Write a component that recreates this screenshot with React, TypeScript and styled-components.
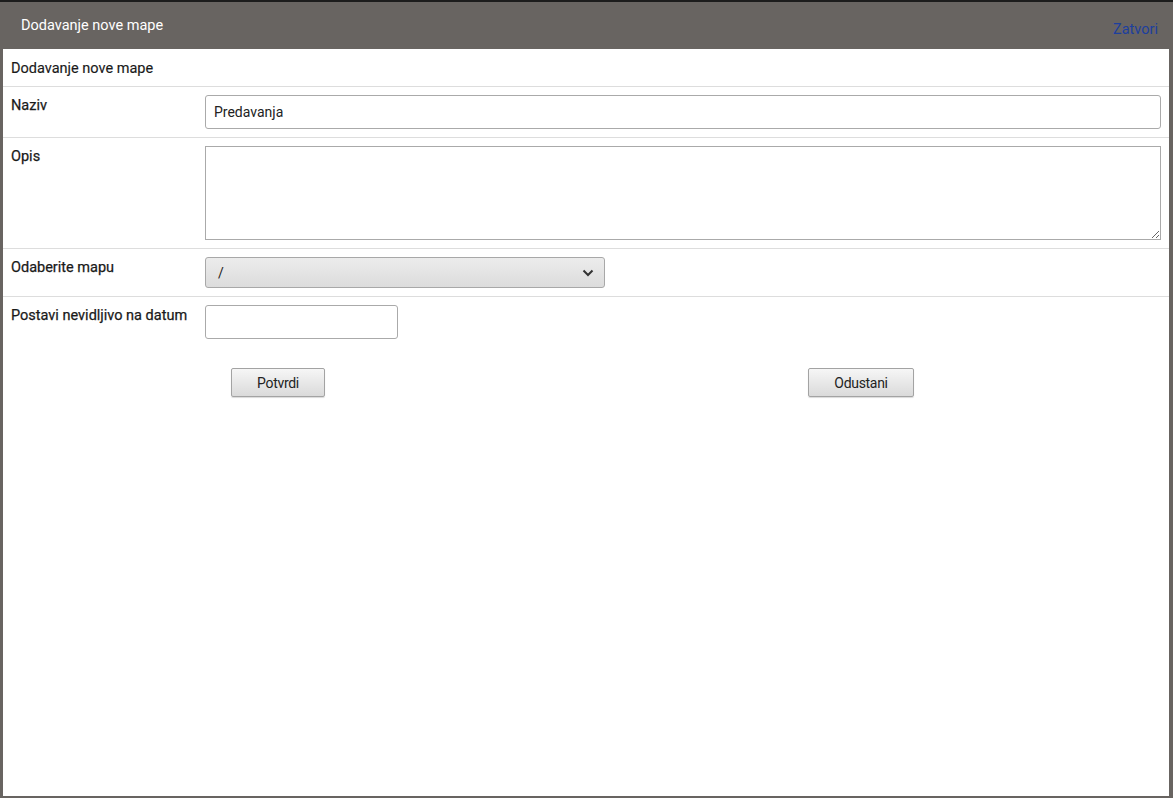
import styled, { createGlobalStyle } from "styled-components";

const GlobalStyle = createGlobalStyle`
  html, body {
    margin: 0;
    padding: 0;
    background: #1c1c1c;
  }
  body {
    font-family: Roboto, "Liberation Sans", sans-serif;
  }
`;

const Page = styled.div`
  height: 798px;
  padding-top: 2px;
  box-sizing: border-box;
  display: flex;
`;

const ModalFrame = styled.section`
  flex: 1;
  display: flex;
  flex-direction: column;
  background: #686461;
  padding: 0 4px 2px 3px;
`;

const ModalHeader = styled.header`
  height: 47px;
  display: flex;
  align-items: center;
  justify-content: space-between;
  padding: 0 11px 0 18px;
  color: #ffffff;
  font-size: 14.5px;
`;

const CloseLink = styled.a`
  color: #1d3f9e;
  font-size: 14.5px;
  text-decoration: none;
  margin-top: 7px;
  cursor: pointer;
`;

const ModalBody = styled.div`
  flex: 1;
  background: #ffffff;
  color: #222222;
  font-size: 14px;
`;

const SectionTitle = styled.div`
  height: 36px;
  display: flex;
  align-items: center;
  padding: 1px 8px 0;
  border-bottom: 1px solid #dddddd;
  font-size: 14.5px;
  color: #1a1a1a;
  -webkit-text-stroke: 0.15px #1a1a1a;
`;

const FormRow = styled.div<{ $last?: boolean }>`
  display: grid;
  grid-template-columns: 194px 1fr;
  padding: 8px;
  border-bottom: ${(p) => (p.$last ? "none" : "1px solid #dddddd")};
`;

const Label = styled.label`
  padding-top: 3px;
  line-height: 16px;
  font-size: 14.5px;
  color: #1a1a1a;
  -webkit-text-stroke: 0.25px #1a1a1a;
`;

const TextInput = styled.input<{ $width?: string }>`
  box-sizing: border-box;
  width: ${(p) => p.$width || "100%"};
  height: 34px;
  border: 1px solid #aaaaaa;
  border-radius: 3px;
  padding: 0 8px;
  font-family: Roboto, "Liberation Sans", sans-serif;
  font-size: 14px;
  color: #222222;
  outline: none;
`;

const TextArea = styled.textarea`
  box-sizing: border-box;
  display: block;
  width: 100%;
  height: 94px;
  border: 1px solid #aaaaaa;
  border-radius: 0;
  font-family: Roboto, "Liberation Sans", sans-serif;
  font-size: 14px;
  outline: none;
`;

const SelectBox = styled.div`
  box-sizing: border-box;
  width: 400px;
  height: 31px;
  border: 1px solid #a8a8a8;
  border-radius: 3px;
  background: linear-gradient(#ececec, #dcdcdc);
  display: flex;
  align-items: center;
  justify-content: space-between;
  padding: 0 10px 0 12px;
  color: #222222;
  font-size: 14px;
`;

const ButtonBar = styled.div`
  display: flex;
  padding: 21px 0 0 228px;
`;

const Button = styled.button<{ $width: number; $offset?: number }>`
  width: ${(p) => p.$width}px;
  height: 29px;
  margin-left: ${(p) => p.$offset || 0}px;
  border: 1px solid #a3a3a3;
  border-radius: 2px;
  background: linear-gradient(#f6f6f6, #dadada);
  box-shadow: 0 1px 1px rgba(0, 0, 0, 0.15);
  font-family: Roboto, "Liberation Sans", sans-serif;
  font-size: 14px;
  color: #222222;
  letter-spacing: -0.3px;
  cursor: pointer;
`;

const Chevron = () => (
  <svg width="12" height="8" viewBox="0 0 12 8">
    <path d="M1.5 1.5 L6 6 L10.5 1.5" fill="none" stroke="#333" strokeWidth="2" />
  </svg>
);

export default function App() {
  return (
    <>
      <GlobalStyle />
      <Page>
        <ModalFrame>
          <ModalHeader>
            <span>Dodavanje nove mape</span>
            <CloseLink>Zatvori</CloseLink>
          </ModalHeader>
          <ModalBody>
            <SectionTitle>Dodavanje nove mape</SectionTitle>
            <FormRow>
              <Label>Naziv</Label>
              <TextInput defaultValue="Predavanja" />
            </FormRow>
            <FormRow>
              <Label>Opis</Label>
              <TextArea />
            </FormRow>
            <FormRow>
              <Label>Odaberite mapu</Label>
              <SelectBox>
                <span>/</span>
                <Chevron />
              </SelectBox>
            </FormRow>
            <FormRow $last>
              <Label>Postavi nevidljivo na datum</Label>
              <TextInput $width="193px" />
            </FormRow>
            <ButtonBar>
              <Button $width={94}>Potvrdi</Button>
              <Button $width={106} $offset={483}>
                Odustani
              </Button>
            </ButtonBar>
          </ModalBody>
        </ModalFrame>
      </Page>
    </>
  );
}
